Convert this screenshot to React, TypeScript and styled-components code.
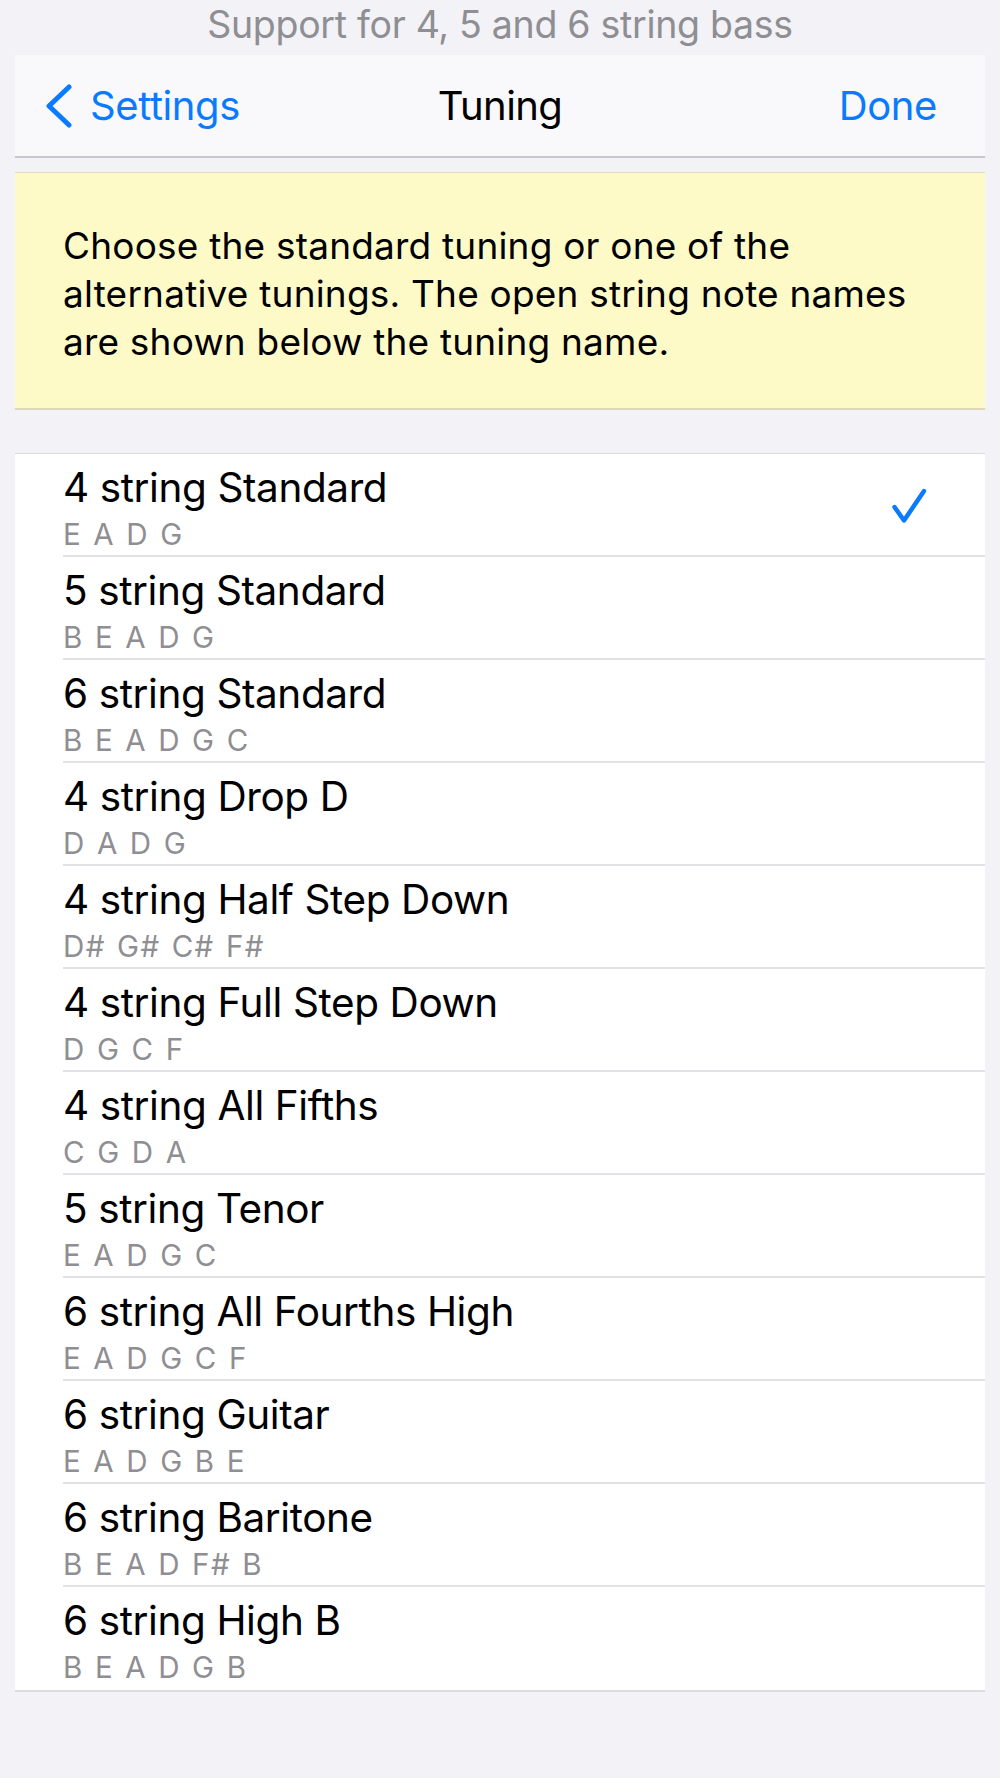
import styled, { createGlobalStyle } from "styled-components";

const GlobalStyle = createGlobalStyle`
  html, body {
    margin: 0;
    padding: 0;
    background: #f2f2f7;
  }
  body {
    font-family: Inter, "Noto Sans", "Liberation Sans", sans-serif;
    -webkit-font-smoothing: antialiased;
  }
`;

const Page = styled.div`
  display: flex;
  flex-direction: column;
  width: 1000px;
  min-height: 1778px;
  padding: 0 15px;
  box-sizing: border-box;
  background: #f2f2f7;
`;

const Banner = styled.div`
  height: 55px;
  display: flex;
  align-items: center;
  justify-content: center;
  font-size: 37.5px;
  color: #8e8e93;
  letter-spacing: -0.3px;
  padding-bottom: 6px;
  box-sizing: border-box;
`;

const NavBar = styled.div`
  display: grid;
  grid-template-columns: 1fr auto 1fr;
  align-items: center;
  height: 103px;
  padding: 0 30px;
  background: #f9f9fb;
  border-bottom: 2px solid #c8c8cc;
  box-sizing: border-box;
`;

const BackButton = styled.div`
  display: flex;
  align-items: center;
  gap: 17px;
  color: #0a7aff;
  font-size: 40px;
  letter-spacing: -0.4px;
`;

const NavTitle = styled.div`
  font-size: 40px;
  color: #000;
  letter-spacing: -0.6px;
`;

const NavAction = styled.div`
  justify-self: end;
  padding-right: 18px;
  font-size: 40px;
  color: #0a7aff;
  letter-spacing: -0.4px;
`;

const Note = styled.div`
  margin-top: 14px;
  background: #fefac8;
  border-top: 1px solid #e0dcc0;
  border-bottom: 2px solid #dcd8bc;
  padding: 49px 40px 42px 48px;
  font-size: 37px;
  line-height: 48px;
  color: #000;
  letter-spacing: 0.2px;
`;

const List = styled.div`
  margin-top: 43px;
  background: #fff;
  border-top: 1px solid #dcdce0;
  border-bottom: 2px solid #dcdce0;
`;

const Row = styled.div`
  padding-left: 48px;
`;

const RowInner = styled.div<{ $last?: boolean }>`
  display: flex;
  align-items: center;
  height: 103px;
  padding-right: 58px;
  box-sizing: border-box;
  border-bottom: ${(p) => (p.$last ? "none" : "2px solid #e2e2e6")};
`;

const RowText = styled.div`
  flex: 1;
  align-self: stretch;
  display: flex;
  flex-direction: column;
  padding-top: 11px;
`;

const Title = styled.div`
  font-size: 40.5px;
  line-height: 46px;
  color: #000;
  letter-spacing: -0.4px;
`;

const Notes = styled.div`
  margin-top: 5px;
  font-size: 29.5px;
  line-height: 36px;
  color: #8e8e93;
  letter-spacing: 1.4px;
  word-spacing: 1.5px;
`;

const CheckBox = styled.div`
  display: flex;
  margin-top: 2px;
`;

const Check = () => (
  <CheckBox>
    <svg width="36" height="36" viewBox="0 0 36 36">
      <polyline
        points="3.5,19 13,32.5 33,3"
        fill="none"
        stroke="#0a7aff"
        strokeWidth="4.5"
        strokeLinecap="round"
        strokeLinejoin="round"
      />
    </svg>
  </CheckBox>
);

const Chevron = () => (
  <svg width="28" height="44" viewBox="0 0 28 44">
    <polyline
      points="24,3 4,22 24,41"
      fill="none"
      stroke="#0a7aff"
      strokeWidth="5"
      strokeLinecap="round"
      strokeLinejoin="round"
    />
  </svg>
);

const tunings = [
  { name: "4 string Standard", notes: "E A D G" },
  { name: "5 string Standard", notes: "B E A D G" },
  { name: "6 string Standard", notes: "B E A D G C" },
  { name: "4 string Drop D", notes: "D A D G" },
  { name: "4 string Half Step Down", notes: "D# G# C# F#" },
  { name: "4 string Full Step Down", notes: "D G C F" },
  { name: "4 string All Fifths", notes: "C G D A" },
  { name: "5 string Tenor", notes: "E A D G C" },
  { name: "6 string All Fourths High", notes: "E A D G C F" },
  { name: "6 string Guitar", notes: "E A D G B E" },
  { name: "6 string Baritone", notes: "B E A D F# B" },
  { name: "6 string High B", notes: "B E A D G B" },
];

const App = () => {
  const selected = 0;
  return (
    <>
      <GlobalStyle />
      <Page>
        <Banner>Support for 4, 5 and 6 string bass</Banner>
        <NavBar>
          <BackButton>
            <Chevron />
            Settings
          </BackButton>
          <NavTitle>Tuning</NavTitle>
          <NavAction>Done</NavAction>
        </NavBar>
        <Note>
          Choose the standard tuning or one of the alternative tunings. The
          open string note names are shown below the tuning name.
        </Note>
        <List>
          {tunings.map((t, i) => (
            <Row key={t.name}>
              <RowInner $last={i === tunings.length - 1}>
                <RowText>
                  <Title>{t.name}</Title>
                  <Notes>{t.notes}</Notes>
                </RowText>
                {i === selected && <Check />}
              </RowInner>
            </Row>
          ))}
        </List>
      </Page>
    </>
  );
};

export default App;
